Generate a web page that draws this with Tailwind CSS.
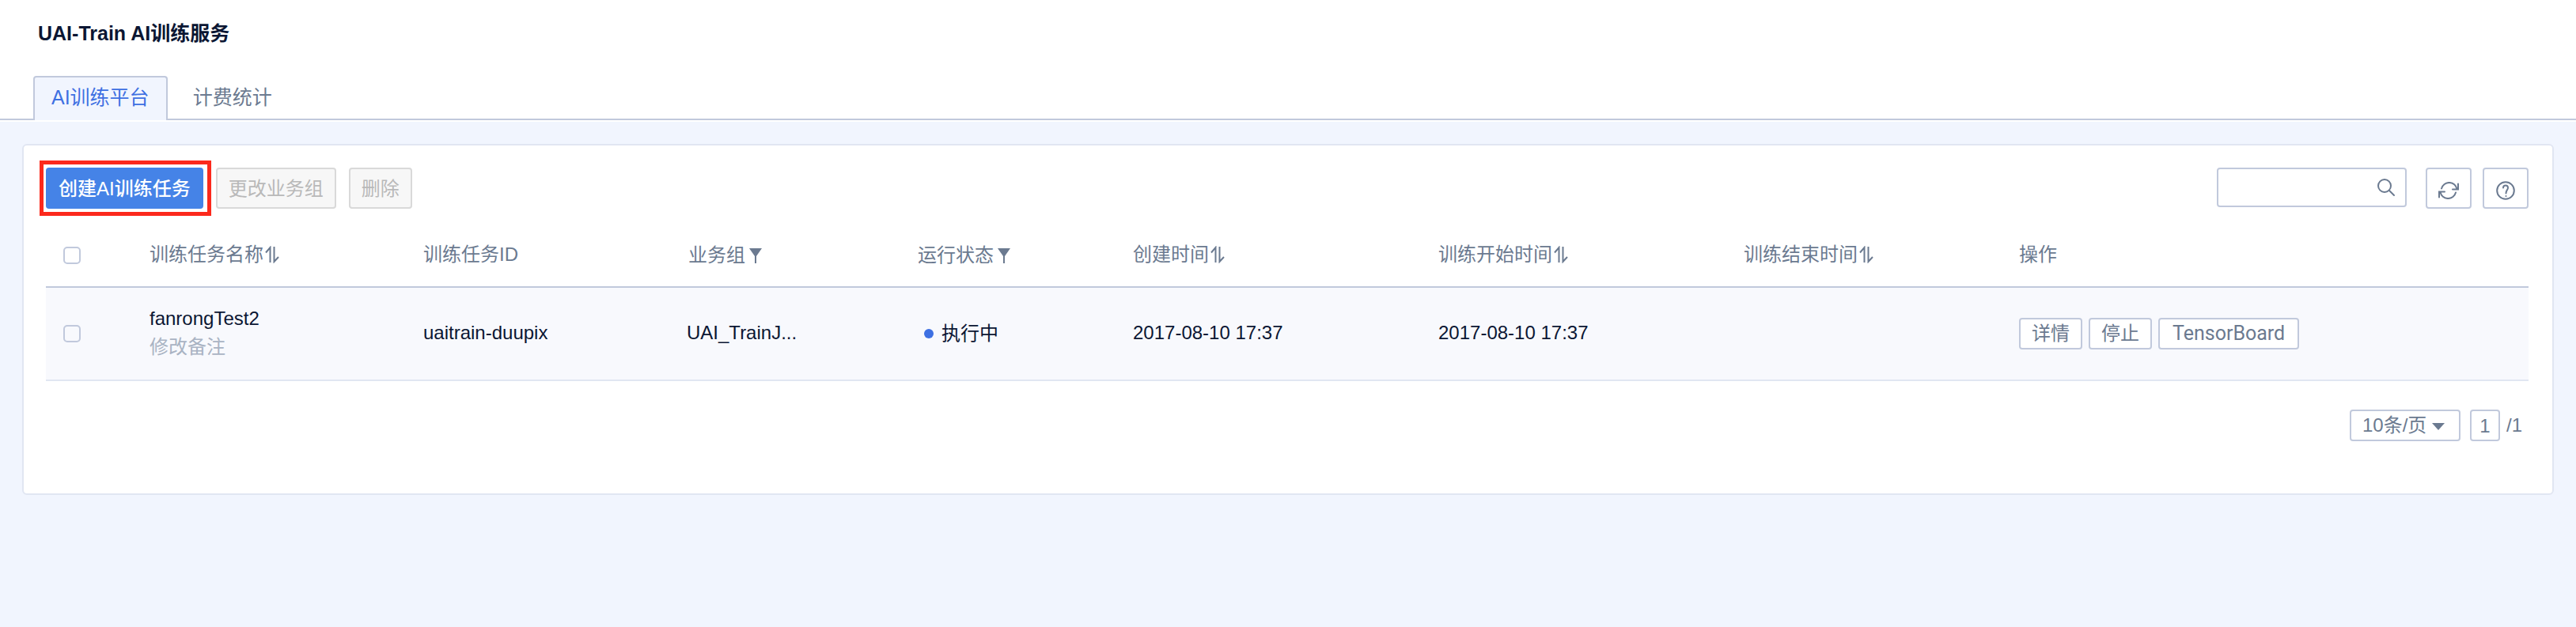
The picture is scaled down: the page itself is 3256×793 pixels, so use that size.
<!DOCTYPE html>
<html lang="zh-CN">
<head>
<meta charset="utf-8">
<title>UAI-Train AI训练服务</title>
<script src="https://cdn.jsdelivr.net/npm/@tailwindcss/browser@4"></script>
</head>
<body class="min-h-screen bg-[#f1f5fe] font-['Liberation_Sans','Noto_Sans_CJK_SC',sans-serif] text-[24px] leading-9 text-[#6b7a90]">
<svg class="hidden" aria-hidden="true">
  <symbol id="sort" viewBox="0 0 18 22"><path d="M1 8.500 6.500 2V21M11.500 1V20L17 14" fill="none" stroke="currentColor" stroke-width="2"/></symbol>
  <symbol id="filter" viewBox="0 0 18 22"><path d="M1 2H17L10 12V21H8V12Z" fill="currentColor"/></symbol>
</svg>

<header class="border-b-2 border-white bg-white">
  <h1 class="px-12 pt-6 pb-9 text-[25px] font-bold text-[#0b1633]">UAI-Train AI训练服务</h1>
  <nav class="flex border-b-2 border-[#c1c9dc] pl-[42px] text-[25px]">
    <a href="#train" class="-mb-0.5 flex h-14 items-center rounded-t-sm border-2 border-b-0 border-[#c1c9dc] bg-[#f1f5fe] px-[21px] pb-1 text-[#3e70e2]">AI训练平台</a>
    <a href="#billing" class="flex h-[54px] items-center px-8">计费统计</a>
  </nav>
</header>

<main class="mx-7 mt-7 rounded-md border-2 border-[#e1e6f2] bg-white pt-7 pr-[30px] pb-[66px] pl-7">
  <div class="flex items-start justify-between">
    <div class="flex">
      <div class="relative">
        <button type="button" class="h-[52px] rounded-sm bg-[#4583e7] px-4 pt-0.5 font-medium text-white">创建AI训练任务</button>
        <span class="pointer-events-none absolute -top-[9px] -right-2.5 -bottom-[9px] -left-2 border-5 border-[#fc291c]"></span>
      </div>
      <button type="button" disabled class="ml-4 h-[52px] rounded-sm border-2 border-[#d9d9d9] bg-[#f7f7f7] px-3.5 pt-0.5 text-[#b9b9b9]">更改业务组</button>
      <button type="button" disabled class="ml-4 h-[52px] rounded-sm border-2 border-[#d9d9d9] bg-[#f7f7f7] px-3.5 pt-0.5 text-[#b9b9b9]">删除</button>
    </div>
    <div class="flex items-start">
      <div class="flex h-[50px] w-60 items-center rounded-sm border-2 border-[#c1c9dc] bg-white pr-3">
        <input type="search" aria-label="搜索" class="min-w-0 flex-1 px-3 outline-none">
        <svg class="size-6" viewBox="0 0 24 24" fill="none" stroke="#6b7a90" stroke-width="2" stroke-linecap="round"><circle cx="10" cy="10" r="8"/><path d="M16 16 22 22"/></svg>
      </div>
      <button type="button" aria-label="刷新" class="ml-6 flex h-[52px] w-[58px] items-center justify-center rounded-sm border-2 border-[#c1c9dc] bg-white pt-1.5">
        <svg class="h-[22px] w-[26px]" viewBox="0 0 26 22" fill="none" stroke="#6b7a90" stroke-width="2" stroke-linecap="round"><path d="M4 8.500A10 10 0 0 1 23.500 9M18 9.500H25V2.500M22 13.500A10 10 0 0 1 2.500 13M8 12.500H1V19.500"/></svg>
      </button>
      <button type="button" aria-label="帮助" class="ml-3.5 flex h-[52px] w-[58px] items-center justify-center rounded-sm border-2 border-[#c1c9dc] bg-white pt-1.5">
        <svg class="size-6" viewBox="0 0 24 24" fill="none" stroke="#6b7a90" stroke-width="2" stroke-linecap="round"><circle cx="12" cy="12" r="10.800"/><path d="M9 8.500C9 4.500 15 4.500 15 8.500C15 11 12.500 11.500 12.500 15.500M12.500 18.900V19"/></svg>
      </button>
    </div>
  </div>

  <table class="mt-[19px] w-full table-fixed border-collapse text-left">
    <colgroup>
      <col class="w-[131px]"><col class="w-[346px]"><col class="w-[333px]"><col class="w-[292px]"><col class="w-[272px]"><col class="w-[386px]"><col class="w-[386px]"><col class="w-[348px]"><col>
    </colgroup>
    <thead>
      <tr class="h-20 border-b-2 border-[#c1c9dc]">
        <th class="pl-[22px]"><input type="checkbox" aria-label="全选" class="block size-[22px] appearance-none rounded-[5px] border-2 border-[#c1c9dc] bg-white checked:bg-[#4583e7]"></th>
        <th class="pb-0.5 font-normal"><span class="flex items-center gap-0.5">训练任务名称<svg class="h-[22px] w-[18px]"><use href="#sort"/></svg></span></th>
        <th class="pb-0.5 font-normal">训练任务ID</th>
        <th class="pl-0.5 font-normal"><span class="flex items-center gap-1">业务组<svg class="h-[22px] w-[18px]"><use href="#filter"/></svg></span></th>
        <th class="font-normal"><span class="flex items-center gap-1">运行状态<svg class="h-[22px] w-[18px]"><use href="#filter"/></svg></span></th>
        <th class="pb-0.5 font-normal"><span class="flex items-center gap-0.5">创建时间<svg class="h-[22px] w-[18px]"><use href="#sort"/></svg></span></th>
        <th class="pb-0.5 font-normal"><span class="flex items-center gap-0.5">训练开始时间<svg class="h-[22px] w-[18px]"><use href="#sort"/></svg></span></th>
        <th class="pb-0.5 font-normal"><span class="flex items-center gap-0.5">训练结束时间<svg class="h-[22px] w-[18px]"><use href="#sort"/></svg></span></th>
        <th class="pb-0.5 font-normal">操作</th>
      </tr>
    </thead>
    <tbody>
      <tr class="h-[118px] border-b-2 border-[#e1e6f2] bg-[#f8f9fd] text-[#0b1633]">
        <td class="pl-[22px]"><input type="checkbox" aria-label="选择 fanrongTest2" class="block size-[22px] appearance-none rounded-[5px] border-2 border-[#c1c9dc] checked:bg-[#4583e7]"></td>
        <td class="pb-0.5">fanrongTest2<br><a href="#remark" class="text-[#a9b3c3]">修改备注</a></td>
        <td class="pb-0.5">uaitrain-duupix</td>
        <td class="pb-0.5">UAI_TrainJ...</td>
        <td><span class="flex items-center gap-2.5 pl-2"><i class="size-3 rounded-full bg-[#3e70e2]"></i>执行中</span></td>
        <td class="pb-0.5">2017-08-10 17:37</td>
        <td class="pb-0.5">2017-08-10 17:37</td>
        <td></td>
        <td>
          <div class="flex gap-2 font-[Roboto,'Noto_Sans_CJK_SC',sans-serif] text-[#6b7a90]">
            <button type="button" class="h-10 rounded-sm border-2 border-[#c1c9dc] bg-white px-3.5">详情</button>
            <button type="button" class="h-10 rounded-sm border-2 border-[#c1c9dc] bg-white px-3.5">停止</button>
            <button type="button" class="h-10 rounded-sm border-2 border-[#c1c9dc] bg-white px-4 text-[25px]">TensorBoard</button>
          </div>
        </td>
      </tr>
    </tbody>
  </table>

  <div class="mt-9 flex items-center justify-end pr-2">
    <div class="relative">
      <select aria-label="每页条数" class="block h-10 w-[140px] appearance-none rounded-sm border-2 border-[#c1c9dc] bg-white pl-3.5"><option>10条/页</option><option>20条/页</option></select>
      <svg class="pointer-events-none absolute top-[17px] right-5 h-[9px] w-4" viewBox="0 0 16 9"><path d="M0 0H16L8 9Z" fill="#6b7a90"/></svg>
    </div>
    <input type="text" aria-label="页码" value="1" class="mr-2 ml-3 h-10 w-[38px] rounded-sm border-2 border-[#c1c9dc] bg-white pt-0.5 text-center">
    <span>/1</span>
  </div>
</main>
</body>
</html>
